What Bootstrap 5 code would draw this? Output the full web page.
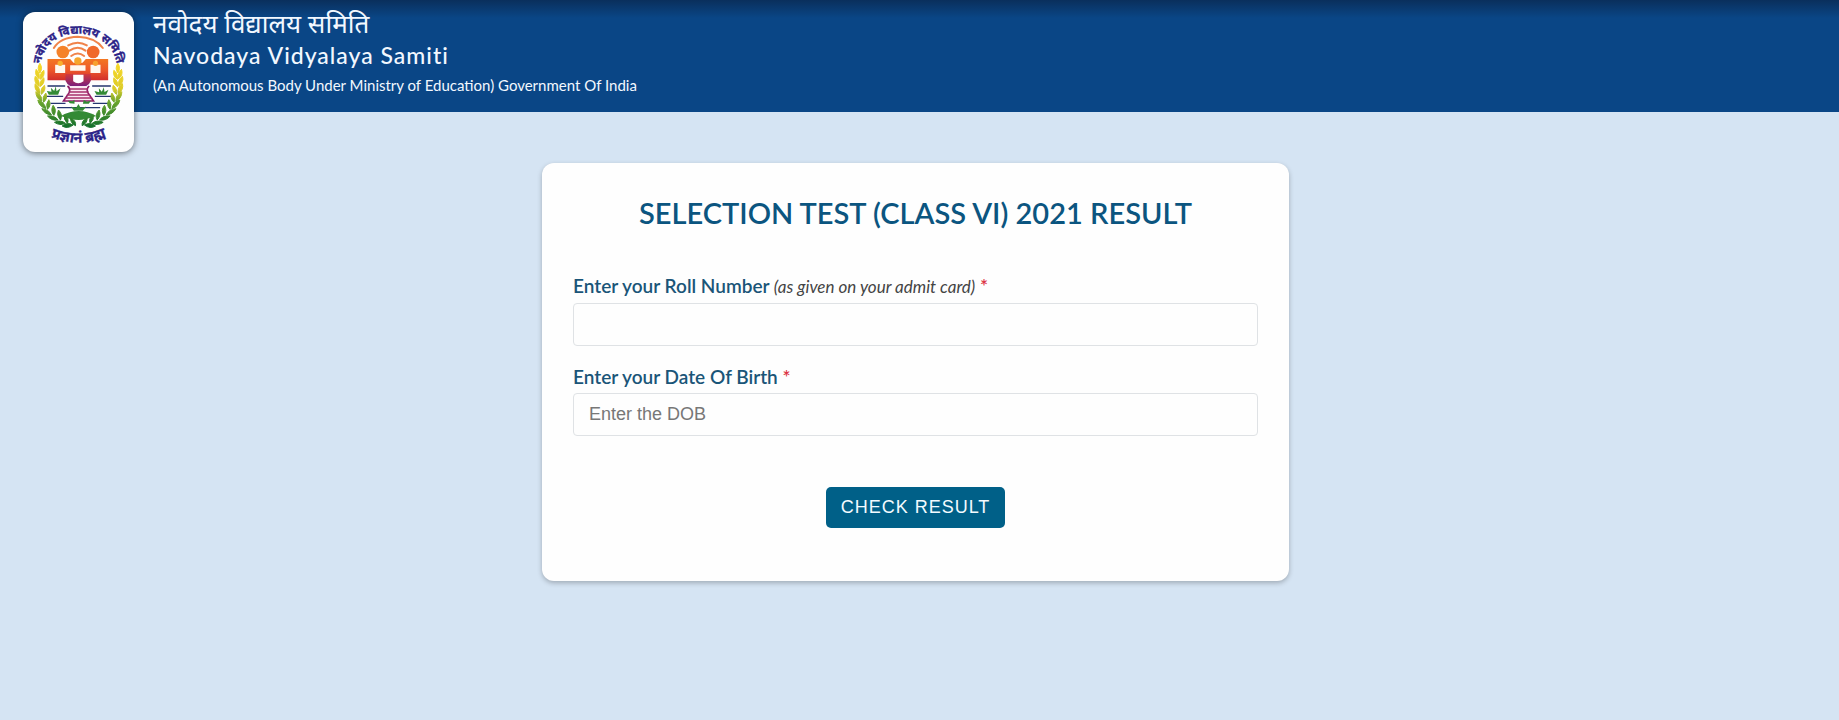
<!DOCTYPE html>
<html lang="en">
<head>
<meta charset="utf-8">
<meta name="viewport" content="width=device-width, initial-scale=1">
<title>Navodaya Vidyalaya Samiti</title>
<link href="https://cdn.jsdelivr.net/npm/bootstrap@5.3.0/dist/css/bootstrap.min.css" rel="stylesheet">
<style>
body { background: #d5e4f3; font-family: Lato, "Noto Sans", sans-serif; }
.site-header { min-height: 112px; background: linear-gradient(#0a2f5c, #0a4686 18px); padding-left: 23px; color: #f2f8ff; }
.emblem { width: 111px; height: 140px; margin: 12px 0 -40px; border-radius: 12px; background: #fefefe; box-shadow: 0 1px 6px rgba(0,0,0,.5); flex: none; }
.emblem svg { display: block; width: 100%; height: 100%; }
.org-text { margin-left: 19px; }
.org-hindi { font-size: 26px; line-height: 32px; margin-top: 7px; }
.org-name { font-size: 23px; line-height: 32px; letter-spacing: 1px; }
.org-note { font-size: 15px; line-height: 28px; }
.org-hindi, .org-name, .org-note { margin-bottom: 0; font-weight: 400; }
.org-name { font-weight: 500; }
main { padding: 51px 8px 40px 0; }
.result-card { background: #fefefe; border-radius: 12px; padding: 32px 31px; box-shadow: 0 2px 5px rgba(0,0,0,.25); }
.result-title { color: #0b5580; font-size: 29px; line-height: 36px; font-weight: 600; margin-bottom: 41px; }
.field { margin-bottom: 17px; }
.form-label { color: #1a5578; font-size: 19px; line-height: 28px; font-weight: 600; margin-bottom: 2px; display: block; }
.hint { color: #444; font-size: 17px; font-weight: 400; }
.req { color: #dc3545; }
.form-control { height: 43px; padding: 6px 15px; font: 18px "Liberation Sans", Arial, sans-serif; border-color: #dfe2e5; border-radius: 4px; background: #fefefe; }
.form-control::placeholder { color: #777; }
.form-actions { padding: 34px 0 21px; }
.btn-check-result { display: block; margin: 0 auto; background: #006088; color: #f4fbff; font: 18px/29px "Liberation Sans", Arial, sans-serif; letter-spacing: 1px; padding: 6px 15px; border: 0; border-radius: 5px; }
.btn-check-result:hover { background: #004f70; color: #fff; }
</style>
</head>
<body>
<header class="site-header d-flex align-items-start">
  <div class="emblem">
    <svg viewBox="0 0 330 420" role="img" aria-label="Navodaya Vidyalaya Samiti emblem">
      <defs>
        <linearGradient id="sun" gradientUnits="userSpaceOnUse" x1="0" y1="130" x2="0" y2="215"><stop offset="0" stop-color="#f5811f"/><stop offset=".5" stop-color="#ee5a2a"/><stop offset="1" stop-color="#c8202c"/></linearGradient>
        <linearGradient id="plum" x1="0" y1="0" x2="0" y2="1"><stop offset="0" stop-color="#d23a3c"/><stop offset="1" stop-color="#6c1c88"/></linearGradient>
        <linearGradient id="leaf" gradientUnits="userSpaceOnUse" x1="0" y1="155" x2="0" y2="345"><stop offset="0" stop-color="#f8d828"/><stop offset=".4" stop-color="#dccb28"/><stop offset=".6" stop-color="#6aa52c"/><stop offset="1" stop-color="#136f2c"/></linearGradient>
        <path id="arcTop" d="M52 164 C56 32 268 32 280 164"/>
        <path id="arcLow" d="M74 372 Q166 412 256 370"/>
      </defs>
      <g font-family="Noto Sans, sans-serif" font-weight="700" fill="#2c2388" stroke="#2c2388">
        <text font-size="35"><textPath href="#arcTop" startOffset="50%" text-anchor="middle">नवोदय विद्यालय समिति</textPath></text>
        <text font-size="43"><textPath href="#arcLow" startOffset="50%" text-anchor="middle">प्रज्ञानं ब्रह्म</textPath></text>
      </g>
      <g fill="none" stroke="#f0834a" stroke-width="6" stroke-linecap="round">
        <path d="M91 108 Q110 76 163 74 Q216 76 238 108"/>
        <path d="M134 100 Q163 84 190 100"/><path d="M138 116 Q163 99 186 116"/><path d="M143 132 Q163 117 182 132"/>
      </g>
      <circle cx="118" cy="120" r="19" fill="#f5822a"/><circle cx="209" cy="120" r="19" fill="#f0682a"/>
      <path d="M72 141H140L150 152H177L187 141H254V205H72Z" fill="url(#sun)"/>
      <path d="M126 186H202V206Q195 226 164 228Q134 226 126 206Z" fill="url(#plum)"/>
      <circle cx="163" cy="147" r="11" fill="#f6a52a"/>
      <path d="M95 158H125V183H95ZM201 158H231V183H201ZM140 160H186V176H140Z" fill="#fff8ef"/>
      <circle cx="110" cy="154" r="8" fill="#f8b02e"/><circle cx="216" cy="154" r="8" fill="#f8a12e"/>
      <path d="M149 188H180V208Q164 220 149 208Z" fill="#fff"/>
      <path d="M132 222 Q142 230 137 242 L120 267 H210 L193 242 Q188 230 197 222" fill="#fbe9f2" stroke="#8b1a67" stroke-width="5"/>
      <path d="M139 231H192M136 240H195M130 249H200M124 258H206" stroke="#a8326c" stroke-width="5"/>
      <path d="M72 222H125M206 222H262M66 253H119M214 253H267M81 274H126M208 274H258M101 287H230" stroke="#26366f" stroke-width="4"/>
      <g fill="#338a35"><path d="M76 248 L70 237 L84 239 L82 227 L92 237 L97 223 L99 238 L111 229 L104 248ZM219 248 L213 237 L227 241 L226 229 L235 239 L241 226 L243 240 L255 233 L248 248Z"/><path d="M139 274 L133 266 L147 268 L153 263 L153 275ZM178 275 L181 264 L190 269 L202 266 L196 275Z"/><path d="M112 312 Q166 282 218 312 Q184 324 166 324 Q142 324 112 312Z"/><path d="M151 296 L143 284 L158 287 L165 276 L171 287 L188 284 L178 296Z"/></g>
      <!-- wheat wreath, drawn once and mirrored about the emblem's axis -->
      <g id="wreath" fill="url(#leaf)" stroke="url(#leaf)" stroke-width="3" stroke-linejoin="round">
        <path d="M49 154 Q39 169 49 183 Q59 169 49 154ZM38 172 Q32 190 47 200 Q51 183 38 172ZM61 175 Q48 184 50 202 Q65 193 61 175ZM35 193 Q30 211 46 222 Q50 204 35 193ZM61 197 Q48 206 49 224 Q65 215 61 197ZM35 215 Q31 234 48 245 Q51 226 35 215ZM63 220 Q50 229 53 247 Q68 237 63 220ZM37 239 Q37 259 55 268 Q56 248 37 239ZM67 243 Q55 254 60 271 Q74 259 67 243ZM43 264 Q47 284 67 290 Q63 270 43 264ZM76 263 Q65 276 72 292 Q85 279 76 263ZM55 290 Q64 307 84 309 Q76 292 55 290ZM89 280 Q80 296 91 310 Q101 295 89 280ZM72 312 Q84 327 104 324 Q92 309 72 312ZM105 294 Q98 310 111 324 Q119 308 105 294ZM93 331 Q109 342 126 334 Q111 322 93 331ZM123 308 Q119 323 132 334 Q138 319 123 308ZM116 342 Q132 352 149 339 Q131 329 116 342ZM141 318 Q140 333 156 341 Q159 326 141 318Z"/>
      </g>
      <use href="#wreath" transform="translate(332 0) scale(-1 1)"/>
    </svg>
  </div>
  <div class="org-text">
    <p class="org-hindi" lang="hi">नवोदय विद्यालय समिति</p>
    <h1 class="org-name">Navodaya Vidyalaya Samiti</h1>
    <p class="org-note">(An Autonomous Body Under Ministry of Education) Government Of India</p>
  </div>
</header>
<main>
  <div class="row gx-3 mx-0 justify-content-center">
    <div class="col-12 col-md-8 col-xl-5">
      <section class="result-card">
        <h2 class="result-title text-center">SELECTION TEST (CLASS VI) 2021 RESULT</h2>
        <form>
          <div class="field">
            <label class="form-label" for="roll">Enter your Roll Number <em class="hint">(as given on your admit card)</em> <span class="req">*</span></label>
            <input class="form-control" id="roll" type="text">
          </div>
          <div class="field">
            <label class="form-label" for="dob">Enter your Date Of Birth <span class="req">*</span></label>
            <input class="form-control" id="dob" type="text" placeholder="Enter the DOB">
          </div>
          <div class="form-actions"><button class="btn btn-check-result" type="button">CHECK RESULT</button></div>
        </form>
      </section>
    </div>
  </div>
</main>
<script src="https://cdn.jsdelivr.net/npm/bootstrap@5.3.0/dist/js/bootstrap.bundle.min.js"></script>
</body>
</html>
